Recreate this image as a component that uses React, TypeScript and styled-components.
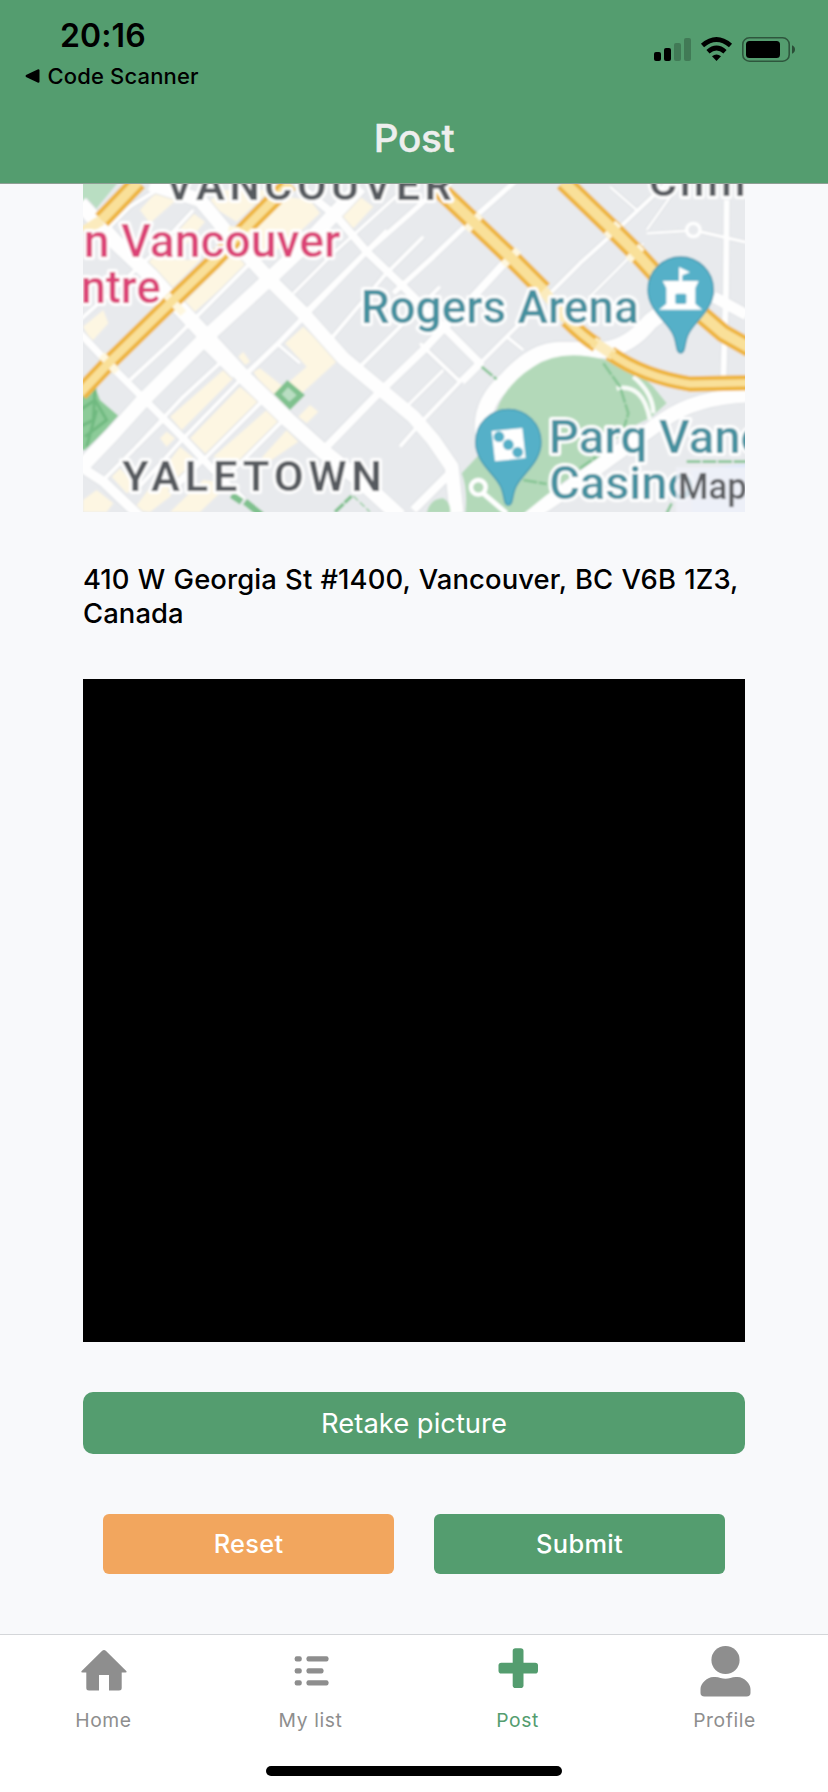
import React from 'react';
import styled, { createGlobalStyle } from 'styled-components';

const GREEN = '#549d6f';
const GREY = '#8e8e8e';

const GlobalStyle = createGlobalStyle`
  * { box-sizing: border-box; }
  body { margin: 0; background: #f8f9fb; }
`;

const Screen = styled.div`
  width: 828px;
  height: 1792px;
  display: flex;
  flex-direction: column;
  overflow: hidden;
  background: #f8f9fb;
  font-family: Inter, 'Liberation Sans', sans-serif;
  color: #000;
`;

const Header = styled.header`
  height: 184px;
  flex: none;
  display: flex;
  flex-direction: column;
  background: ${GREEN};
  border-bottom: 1px solid #8f9f95;
`;

const StatusBar = styled.div`
  height: 96px;
  display: flex;
  justify-content: space-between;
  padding: 16px 33px 0 25px;
`;

const StatusLeft = styled.div`
  display: flex;
  flex-direction: column;
`;

const Clock = styled.div`
  padding-left: 35px;
  font-size: 32px;
  line-height: 39px;
  font-weight: 600;
  letter-spacing: 0.1px;
`;

const BackLink = styled.div`
  display: flex;
  align-items: center;
  gap: 7.5px;
  font-size: 22px;
  line-height: 42px;
  font-weight: 500;
  letter-spacing: 0.15px;
  white-space: nowrap;
`;

const StatusIcons = styled.div`
  display: flex;
  padding-top: 20px;
`;

const Title = styled.h1`
  margin: 0;
  padding-top: 19px;
  text-align: center;
  font-size: 38.7px;
  line-height: 46px;
  font-weight: 500;
  letter-spacing: -0.4px;
  color: #eeeeee;
  -webkit-text-stroke: 0.4px #eeeeee;
`;

const Content = styled.main`
  flex: 1;
  display: flex;
  flex-direction: column;
  padding: 0 83px;
`;

const MapView = styled.svg`
  display: block;
  width: 662px;
  height: 328px;
  flex: none;
`;

const Address = styled.p`
  margin: 50px 0 49px;
  font-size: 27.4px;
  line-height: 34px;
  font-weight: 500;
  letter-spacing: 0.1px;
  word-spacing: 0.8px;
  white-space: nowrap;
`;

const Photo = styled.div`
  height: 663px;
  flex: none;
  background: #000;
`;

const Button = styled.button<{ $tone?: string; $large?: boolean }>`
  border: 0;
  padding: ${(p) => (p.$large ? 0 : '0 0 2px')};
  flex: ${(p) => (p.$large ? 'none' : '1')};
  height: ${(p) => (p.$large ? 62 : 60)}px;
  margin-top: ${(p) => (p.$large ? 50 : 0)}px;
  border-radius: ${(p) => (p.$large ? 10 : 6)}px;
  background: ${(p) => p.$tone || GREEN};
  color: #fff;
  font-family: inherit;
  font-size: ${(p) => (p.$large ? 27.4 : 25.4)}px;
  font-weight: ${(p) => (p.$large ? 400 : 500)};
  letter-spacing: ${(p) => (p.$large ? 0 : 0.3)}px;
`;

const Actions = styled.div`
  display: flex;
  gap: 40px;
  padding: 60px 20px 0;
`;

const TabBar = styled.nav`
  height: 158px;
  flex: none;
  display: flex;
  flex-direction: column;
  align-items: center;
  justify-content: space-between;
  padding-bottom: 16px;
  background: #fff;
  border-top: 1px solid #d4d6d9;
`;

const Tabs = styled.div`
  display: flex;
  width: 100%;
`;

const Tab = styled.a<{ $active?: boolean }>`
  flex: 1;
  display: flex;
  flex-direction: column;
  align-items: center;
  padding-top: 5px;
  color: ${(p) => (p.$active ? GREEN : GREY)};
  font-size: 19.3px;
  line-height: 24px;
  letter-spacing: 0.6px;

  svg {
    margin-bottom: 12px;
    overflow: visible;
  }
`;

const HomeIndicator = styled.div`
  width: 296px;
  height: 10px;
  border-radius: 5px;
  background: #000;
`;

const cream = [
  'M210 90L280 12L330 50L240 130Z',
  'M410 70L460 30L600 30L500 125Z',
  'M645 50L720 60L750 100L640 200L550 240L370 400L340 370L490 220Z',
  'M810 110L870 50L910 80L850 145Z',
  'M230 250L290 190L370 100L405 125L310 240L390 240L300 330Z',
  'M39 440L100 390L115 430L65 485Z',
  'M645 490L700 440L805 540L630 700L550 575L570 565L640 620L710 560Z',
  'M505 530L520 515L540 545L525 555Z',
  'M300 710L460 570L490 595L335 750Z',
  'M360 775L510 620L565 665L410 825Z',
  'M430 830L590 690L635 725L510 850Z',
  'M560 850L650 750L685 785L590 850Z',
  'M685 710L720 675L745 695L710 730Z',
  'M270 775L290 755L315 775L290 800Z',
  'M125 890L150 865L200 920L170 940Z',
  'M39 960L80 930L130 970L110 996L39 996Z',
  'M190 990L330 800L390 850L300 950L240 996Z',
  'M300 996L400 900L480 910L390 996Z',
];

const roads: [number, string][] = [
  [46, 'M30 70L140 190L240 285L330 385L410 470L520 590L660 725L760 815L870 900L990 1010'],
  [42, 'M240 12L390 60L490 180L595 295L700 400L820 535L940 635L1030 710L1090 780L1145 860L1160 1000'],
  [44, 'M30 865L130 760L220 660L410 470L600 295L700 200L790 105L870 20'],
  [22, 'M30 460L115 550L220 655L340 775L430 870L520 960'],
  [30, 'M30 860L100 905L210 1010'],
  [24, 'M690 20L800 110L890 215L1000 320L1120 440L1230 550L1175 605'],
  [16, 'M520 590L630 485L760 350L890 215L1010 110L1100 30'],
  [24, 'M755 815L930 635L1060 510L1210 350L1330 220'],
  [12, 'M90 170L180 80L290 12'],
  [12, 'M30 420L120 340L240 230L370 90'],
  [12, 'M180 600L310 480L440 350L550 240'],
  [12, 'M100 900L190 810L340 650L460 540'],
  [12, 'M190 940L340 775L520 590'],
  [12, 'M300 940L450 790L580 660'],
  [12, 'M480 880L650 710'],
  [10, 'M400 500L490 590'],
  [10, 'M670 340L790 220L900 120L1010 20'],
  [10, 'M710 390L840 260L950 150'],
  [12, 'M780 480L940 290L1060 170'],
  [12, 'M860 570L1000 430L1110 320'],
  [10, 'M620 490L690 550'],
  [12, 'M280 720L200 800M390 840L300 925'],
  [16, 'M970 340L1090 230L1210 115L1340 0'],
  [12, 'M1440 340L1530 250L1635 155L1790 10'],
  [8, 'M1560 350L1640 270L1720 190'],
  [8, 'M1730 150L1815 30'],
  [8, 'M1620 20L1700 90M1730 160L1860 152'],
  [10, 'M1890 155L2030 187'],
  [18, 'M1970 60L1968 330L1960 600'],
  [12, 'M1050 490L1170 605L1060 720L990 800'],
  [10, 'M1010 680L1120 570M1120 450L1040 520'],
  [12, 'M1230 550L1350 430'],
  [10, 'M1310 470L1360 510'],
  [50, 'M1240 760Q1230 670 1310 600Q1390 510 1470 510L1600 510Q1680 500 1740 425L1840 350'],
  [34, 'M1930 350L2030 405'],
  [44, 'M1370 1010L1490 930L1620 835L1780 720Q1880 650 2040 645'],
  [26, 'M1030 990L1150 870'],
];

const highways = [
  { w: 50, d: 'M30 640L115 550L310 360L430 245L540 130L660 10' },
  { w: 54, d: 'M95 120L205 5' },
  { w: 56, d: 'M1090 10L1210 125L1320 230L1420 330' },
  { w: 46, d: 'M1490 420Q1540 470 1580 495M1620 520Q1720 590 1860 612L2040 608' },
  { w: 56, d: 'M1480 5L1630 150L1700 220L1800 330L1890 400L1960 460L2040 505' },
];

const crossings = [
  'M290 345L340 400', 'M95 525L140 575', 'M475 150L580 160',
  'M1190 150L1230 105', 'M1300 255L1345 210', 'M1610 170L1645 130', 'M1675 240L1715 200',
];

function Pin({ x, y, children }: { x: number; y: number; children: React.ReactNode }) {
  return (
    <g transform={`translate(${x} ${y})`}>
      <path
        d="M0 190C-16 190-10 155-25 130C-45 92-98 60-98 0A98 98 0 0 1 98 0C98 60 45 92 25 130C10 155 16 190 0 190Z"
        fill="#54b0c8" stroke="#4199b0" strokeWidth="4"
      />
      {children}
    </g>
  );
}

function CityMap() {
  return (
    <MapView viewBox="39 12 1986 984" preserveAspectRatio="none">
      <defs>
        <filter id="soft" x="0" y="0" width="100%" height="100%">
          <feGaussianBlur stdDeviation="2.6" />
        </filter>
      </defs>
      <g filter="url(#soft)">
        <rect x="0" y="-20" width="2060" height="1050" fill="#e8eaed" />
        {cream.map((d) => <path key={d} d={d} fill="#fdf6e2" />)}
        <path d="M30 0H150L68 100L30 65Z" fill="#b9dec2" />
        <path d="M30 650L75 620L90 660L150 712L45 810H30Z" fill="#8ccb98" />
        <path d="M30 690L75 660L110 720L45 770M75 620L70 720L30 740M80 690L50 800" fill="none" stroke="#70b980" strokeWidth="9" />
        <path d="M1700 860H1830L2040 820V1010H1790Z" fill="#e8eaed" />
        <path d="M1865 870L2040 850V1010H1865Z" fill="#dfe8f9" />
        <g fill="none" stroke="#dadde1">
          {roads.map(([w, d]) => <path key={d} d={d} strokeWidth={w + 5} strokeLinejoin="round" />)}
        </g>
        <g fill="none" stroke="#fefefe">
          {roads.map(([w, d]) => <path key={d} d={d} strokeWidth={w} strokeLinejoin="round" />)}
        </g>
        <path
          d="M1175 880L1240 810L1280 690Q1310 610 1390 560Q1470 505 1600 538Q1700 570 1750 620L1790 670L1740 715Q1650 750 1590 830Q1480 900 1350 1010H1185Q1195 930 1175 880Z"
          fill="#b3d9b9"
        />
        <path d="M1070 1000Q1080 955 1120 955Q1145 970 1140 1000Z" fill="#b3d9b9" />
        <path d="M1640 625Q1720 610 1740 720M1690 590Q1750 640 1750 700" fill="none" stroke="#f8fcf8" strokeWidth="13" />
        <path d="M1600 550L1650 620L1675 700L1660 750M1235 560L1280 598M1360 900L1430 912M1530 865L1580 830M1850 845H2030M1790 1000L1805 970" fill="none" stroke="#86c594" strokeWidth="8" strokeDasharray="42 5" />
        <circle cx="1225" cy="922" r="22" fill="#b3d9b9" stroke="#fff" strokeWidth="13" />
        <path d="M1240 940L1310 1000" stroke="#fff" strokeWidth="15" />
        <circle cx="1870" cy="150" r="20" fill="#e8eaed" stroke="#fff" strokeWidth="10" />
        <path d="M652 600L705 645L660 690L612 642Z" fill="#7fc18e" />
        <path d="M654 622L680 646L658 665L635 643Z" fill="#b9dec2" />
        <path d="M485 945L515 965M525 965L575 1005" stroke="#7fc18e" strokeWidth="20" />
        <path d="M795 996L845 948" stroke="#7fc18e" strokeWidth="10" strokeDasharray="36 4" />
        <path d="M850 948L900 996" stroke="#8ccb98" strokeWidth="4" strokeDasharray="20 7" />
        <g fill="none">
          {highways.map((h) => <path key={h.d} d={h.d} stroke="#eeb540" strokeWidth={h.w} />)}
          <path d="M95 120L40 155M1415 325L1490 420M1570 485L1630 525" stroke="#fbebbd" strokeWidth="32" />
          {crossings.map((d) => <path key={d} d={d} stroke="#fef7df" strokeWidth="24" />)}
          {highways.map((h) => <path key={h.d} d={h.d} stroke="#f9e099" strokeWidth={h.w - 25} />)}
        </g>
        <g fontFamily="Roboto, sans-serif" fontSize="138" fontWeight="500" strokeLinejoin="round" paintOrder="stroke" stroke="#fff" strokeWidth="18">
          <g fill="#565a5f" fontWeight="600" fontSize="130">
            <text x="286" y="60" textLength="860">VANCOUVER</text>
            <text x="1736" y="48" textLength="290">Chin</text>
            <text x="156" y="933" textLength="780">YALETOWN</text>
          </g>
          <g fill="#db4376">
            <text x="41" y="232" textLength="770" lengthAdjust="spacingAndGlyphs">n Vancouver</text>
            <text x="32" y="370" textLength="240" lengthAdjust="spacingAndGlyphs">ntre</text>
          </g>
          <g fill="#44909f">
            <text x="872" y="430" textLength="834" lengthAdjust="spacingAndGlyphs">Rogers Arena</text>
            <text x="1436" y="818" textLength="650" lengthAdjust="spacingAndGlyphs">Parq Vanc</text>
            <text x="1438" y="957" textLength="434" lengthAdjust="spacingAndGlyphs">Casino</text>
          </g>
        </g>
        <path d="M1818 862H2060V1012H1818Z" fill="#f0f2f8" fillOpacity=".82" />
        <text x="1824" y="957" textLength="207" lengthAdjust="spacingAndGlyphs" fontFamily="Roboto, sans-serif" fontSize="110" fontWeight="500" fill="#5b5d61">Map</text>
        <Pin x={1832} y={329}>
          <path d="M-54-26H-5V-68L28-52L5-43V-26H54L44-5V42L65 60H-65L-43 42V-5Z" fill="#fff" />
          <rect x="-16" y="12" width="33" height="31" rx="5" fill="#54b0c8" />
        </Pin>
        <Pin x={1315} y={786}>
          <path d="M-50-33L42-42L52 48L-40 58Z" fill="#fff" />
          <circle cx="-28" cy="-16" r="16" fill="#54b0c8" />
          <circle cx="0" cy="8" r="16" fill="#54b0c8" />
          <circle cx="28" cy="31" r="16" fill="#54b0c8" />
        </Pin>
      </g>
    </MapView>
  );
}

export default function App() {
  return (
    <>
      <GlobalStyle />
      <Screen>
        <Header>
          <StatusBar>
            <StatusLeft>
              <Clock>20:16</Clock>
              <BackLink>
                <svg width="15" height="14" viewBox="0 0 15 14"><path d="M1 6Q0 7 1 8L12.6 13.6Q14.5 14 14.5 12.5V1.5Q14.5 0 12.6.4Z" /></svg>
                Code Scanner
              </BackLink>
            </StatusLeft>
            <StatusIcons>
              <svg width="142" height="28" viewBox="652 36 142 28">
                <rect x="653" y="52" width="7" height="9" rx="2" />
                <rect x="663" y="48" width="7" height="13" rx="2" />
                <g opacity=".22">
                  <rect x="673" y="43" width="7" height="18" rx="2" />
                  <rect x="683" y="38" width="7" height="23" rx="2" />
                </g>
                <path d="M701.5 45.5Q715.5 33.5 729.5 45.5M707 51.7Q715.5 44.3 724 51.7" fill="none" stroke="#000" strokeWidth="4.8" />
                <path d="M711 56.3Q715.5 52.6 720 56.3L715.5 61Z" />
                <rect x="741.8" y="37.8" width="46.4" height="23.4" rx="6.5" fill="none" stroke="#000" strokeOpacity=".45" strokeWidth="1.6" />
                <rect x="745" y="41" width="34" height="17" rx="3.5" />
                <path d="M791 45.3Q794 46.5 794 49.5T791 53.7Z" opacity=".5" />
              </svg>
            </StatusIcons>
          </StatusBar>
          <Title>Post</Title>
        </Header>

        <Content>
          <CityMap />
          <Address>410 W Georgia St #1400, Vancouver, BC V6B 1Z3,<br />Canada</Address>
          <Photo />
          <Button $large>Retake picture</Button>
          <Actions>
            <Button $tone="#f2a65e">Reset</Button>
            <Button>Submit</Button>
          </Actions>
        </Content>

        <TabBar>
          <Tabs>
            <Tab>
              <svg width="52" height="56" viewBox="78 1640 52 56" fill="currentColor">
                <path d="M102.2 1650.7Q104 1649.3 105.8 1650.7L126.5 1671.2Q127 1672.6 125.5 1672.6H121.7V1688Q121.7 1690.5 119 1690.5H109V1675H99V1690.5H89Q86.3 1690.5 86.3 1688V1672.6H82.5Q80.8 1672.6 81.4 1671.2Z" />
              </svg>
              Home
            </Tab>
            <Tab>
              <svg width="52" height="56" viewBox="284.5 1640 52 56" fill="currentColor">
                <rect x="294.2" y="1656.2" width="7" height="5.4" rx="2" />
                <rect x="306" y="1656.2" width="22" height="5.4" rx="2" />
                <rect x="294.2" y="1668.2" width="7" height="5.4" rx="2" />
                <rect x="306" y="1668.2" width="17" height="5.4" rx="2" />
                <rect x="294.2" y="1680.2" width="7" height="5.4" rx="2" />
                <rect x="306" y="1680.2" width="22" height="5.4" rx="2" />
              </svg>
              My list
            </Tab>
            <Tab $active>
              <svg width="52" height="56" viewBox="491.5 1640 52 56" fill="currentColor">
                <rect x="512.2" y="1648.3" width="10.8" height="39.7" rx="2.8" />
                <rect x="498" y="1662.8" width="39.5" height="10.8" rx="2.8" />
              </svg>
              Post
            </Tab>
            <Tab>
              <svg width="52" height="56" viewBox="698.5 1640 52 56" fill="currentColor">
                <circle cx="725" cy="1660" r="14.1" />
                <path d="M713 1677Q717 1676.6 720 1678Q725 1679.6 730 1678Q733 1676.6 737 1677C744 1677 750 1684 750 1689V1693Q750 1696.4 746 1696.4H704Q700 1696.4 700 1693V1689C700 1684 706 1677 713 1677Z" />
              </svg>
              Profile
            </Tab>
          </Tabs>
          <HomeIndicator />
        </TabBar>
      </Screen>
    </>
  );
}
